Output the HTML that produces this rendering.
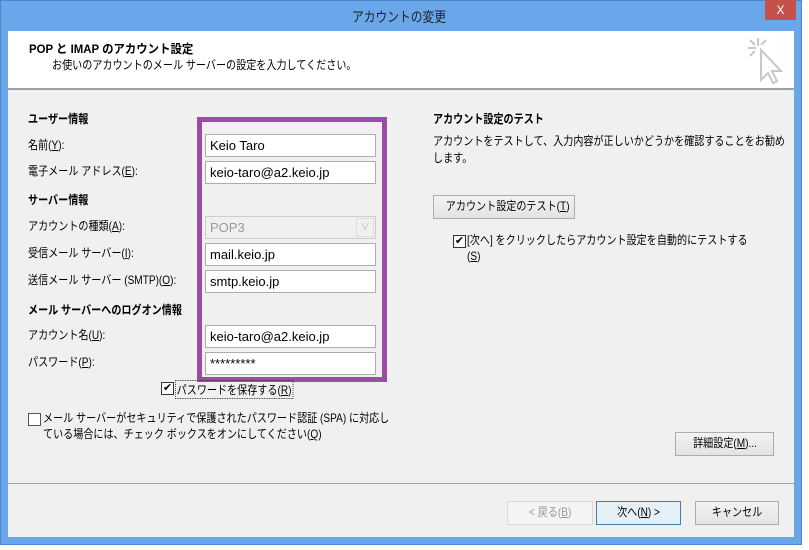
<!DOCTYPE html>
<html><head><meta charset="utf-8"><style>
*{margin:0;padding:0;box-sizing:border-box}
body{width:809px;height:550px;background:#fff;position:relative;overflow:hidden;font-family:"Liberation Sans","Noto Sans CJK JP",sans-serif;font-size:12px;color:#000}
.a{position:absolute;white-space:nowrap}
.s{transform:scaleX(.84);transform-origin:0 0}
#frame{position:absolute;left:0;top:0;width:802px;height:545px;background:#6aa7ea;border:1px solid #4a87cc}
#hdr{position:absolute;left:8px;top:31px;width:786px;height:58px;background:#fff;border-bottom:1px solid #a0a0a0}
#body{position:absolute;left:8px;top:90px;width:786px;height:447px;background:#f0f0f0}
.in{position:absolute;left:205px;width:171px;height:23px;background:#fff;border:1px solid #abadb3;padding:3px 4px;font-size:13px}
.btn{position:absolute;height:24px;border:1px solid #adadad;background:linear-gradient(#f3f3f3,#e3e3e3);text-align:center;line-height:21px;white-space:nowrap;overflow:hidden}
.btn span{display:inline-block;transform:scaleX(.84)}
.cb{position:absolute;width:13px;height:13px;border:1px solid #333;background:#fff;font-size:11px;line-height:11px;text-align:center}
u{text-decoration:underline}
</style></head><body>
<div id="frame"></div>
<div class="a s" style="left:352px;top:7px;font-size:14px;color:#222">アカウントの変更</div>
<div class="a" style="left:765px;top:0;width:31px;height:20px;background:#c7504b;color:#fff;text-align:center;font-size:12px;line-height:20px">X</div>
<div id="hdr"></div>
<div class="a" style="left:29px;top:40px;font-weight:bold;transform:scaleX(.95);transform-origin:0 0">POP と IMAP のアカウント設定</div>
<div class="a s" style="left:52px;top:56px">お使いのアカウントのメール サーバーの設定を入力してください。</div>
<svg class="a" style="left:744px;top:36px" width="40" height="50" viewBox="0 0 40 50"><g stroke="#c8c8c8" stroke-width="2" fill="none"><path d="M14 2v8M4 12h8M6 4l5 5M22 4l-5 5M6 20l5-5"/><path d="M17 14v30l7-7 5 10 4-2-5-10h9z" fill="#fff"/></g></svg>
<div id="body"></div>
<div class="a s" style="left:28px;top:110px;font-weight:bold">ユーザー情報</div>
<div class="a s" style="left:28px;top:136px">名前(<u>Y</u>):</div>
<div class="a s" style="left:28px;top:162px">電子メール アドレス(<u>E</u>):</div>
<div class="a s" style="left:28px;top:191px;font-weight:bold">サーバー情報</div>
<div class="a s" style="left:28px;top:217px">アカウントの種類(<u>A</u>):</div>
<div class="a s" style="left:28px;top:244px">受信メール サーバー(<u>I</u>):</div>
<div class="a s" style="left:28px;top:271px">送信メール サーバー (SMTP)(<u>O</u>):</div>
<div class="a s" style="left:28px;top:301px;font-weight:bold">メール サーバーへのログオン情報</div>
<div class="a s" style="left:28px;top:326px">アカウント名(<u>U</u>):</div>
<div class="a s" style="left:28px;top:353px">パスワード(<u>P</u>):</div>
<div class="a" style="left:197px;top:117px;width:190px;height:265px;border:5px solid #9b4ca3"></div>
<div class="in" style="top:134px">Keio Taro</div>
<div class="in" style="top:161px">keio-taro@a2.keio.jp</div>
<div class="in" style="top:216px;background:#f0f0f0;border-color:#ccc;color:#999">POP3<span style="position:absolute;right:1px;top:1px;width:18px;height:19px;border:1px solid #ddd;color:#bbb;font-size:10px;text-align:center;line-height:17px">∨</span></div>
<div class="in" style="top:243px">mail.keio.jp</div>
<div class="in" style="top:270px">smtp.keio.jp</div>
<div class="in" style="top:325px">keio-taro@a2.keio.jp</div>
<div class="in" style="top:352px">*********</div>
<div class="cb" style="left:161px;top:382px">✔</div>
<div class="a s" style="left:175px;top:380px;border:1px dotted #333;padding:0 1px">パスワードを保存する(<u>R</u>)</div>
<div class="cb" style="left:28px;top:413px;border-color:#555"></div>
<div class="a s" style="left:43px;top:410px;line-height:16px">メール サーバーがセキュリティで保護されたパスワード認証 (SPA) に対応し<br>ている場合には、チェック ボックスをオンにしてください(<u>Q</u>)</div>
<div class="a s" style="left:433px;top:110px;font-weight:bold">アカウント設定のテスト</div>
<div class="a s" style="left:433px;top:133px;line-height:17px">アカウントをテストして、入力内容が正しいかどうかを確認することをお勧め<br>します。</div>
<div class="btn" style="left:433px;top:195px;width:142px"><span>アカウント設定のテスト(<u>T</u>)</span></div>
<div class="cb" style="left:453px;top:235px">✔</div>
<div class="a s" style="left:467px;top:232px;line-height:16px">[次へ] をクリックしたらアカウント設定を自動的にテストする<br>(<u>S</u>)</div>
<div class="btn" style="left:675px;top:432px;width:99px"><span>詳細設定(<u>M</u>)...</span></div>
<div class="a" style="left:8px;top:483px;width:786px;height:1px;background:#a0a0a0"></div>
<div class="btn" style="left:507px;top:501px;width:86px;color:#999;background:#f4f4f4;border-color:#d9d9d9"><span>&lt; 戻る(<u>B</u>)</span></div>
<div class="btn" style="left:596px;top:501px;width:85px;border-color:#3c7fb1;background:#e6eef6"><span>次へ(<u>N</u>) &gt;</span></div>
<div class="btn" style="left:695px;top:501px;width:84px"><span>キャンセル</span></div>
</body></html>
